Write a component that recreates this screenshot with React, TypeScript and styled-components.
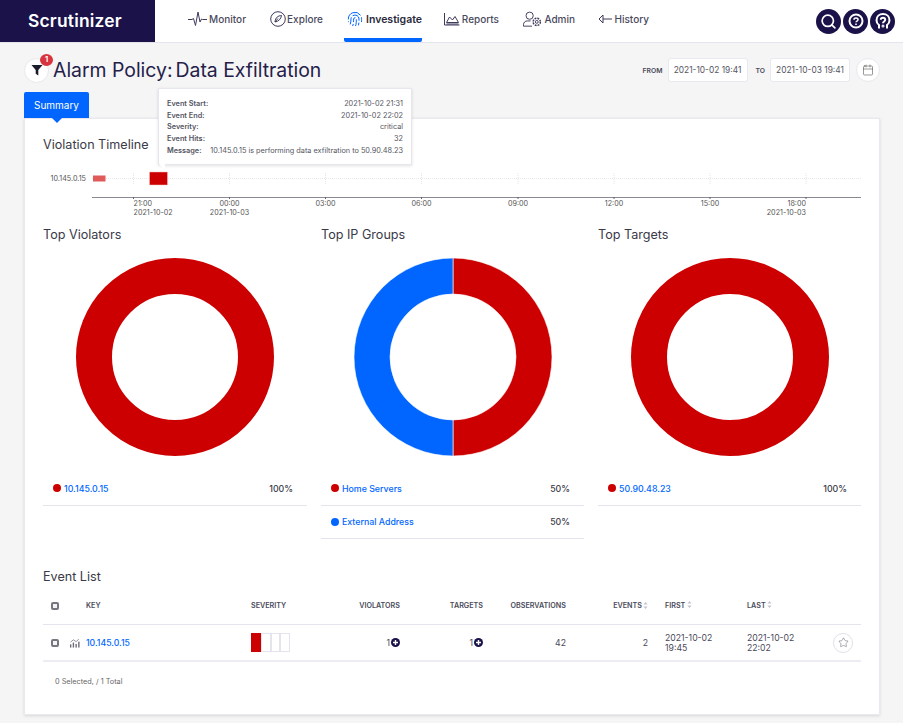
import React from "react";
import styled, { createGlobalStyle } from "styled-components";
import { Calendar, Fingerprint, Search, Star } from "lucide-react";

const NAVY = "#1a1249";
const RED = "#cc0000";
const BLUE = "#0066ff";
const ICON = "#3d3a5c";
const FONT = `Inter, "Noto Sans", "Liberation Sans", sans-serif`;

const GlobalStyle = createGlobalStyle`
  html, body { margin: 0; padding: 0; background: #f5f5f5; }
  body { font-family: ${FONT}; color: #3a3a4a; }
  * { box-sizing: border-box; }
`;

const MonitorIcon = () => (
  <svg width="19" height="16" viewBox="0 0 19 16" fill="none" stroke={ICON} strokeWidth="1">
    <path d="M0 8.500h4l1.500 -1 2 7 2.500 -13.500 2 10 1.500 -3 1 .5h4.500" />
  </svg>
);

const ExploreIcon = () => (
  <svg width="16" height="16" viewBox="0 0 16 16" fill="none" stroke={ICON} strokeWidth="1">
    <circle cx="8" cy="8" r="7.300" />
    <path d="M11.500 4.500c-3.500 .3 -6 1.800 -6.500 6.500 3.500 -.5 6 -3 6.500 -6.500z" />
    <path d="M5 11l3 -3.500" />
  </svg>
);

const ReportsIcon = () => (
  <svg width="16" height="14" viewBox="0 0 16 14" fill="none" stroke={ICON} strokeWidth="1">
    <path d="M.5 1v12h15" />
    <path d="M2.500 10.500l3 -5.500 3 3 2.500 -3.500 3.500 6z" />
    <path d="M2.500 12h12" />
  </svg>
);

const AdminIcon = () => (
  <svg width="19" height="17" viewBox="0 0 20 17" fill="none" stroke={ICON} strokeWidth="1">
    <circle cx="7" cy="4.500" r="3.800" />
    <path d="M.5 15.500v-1.500c0 -2.500 2 -4 4 -4h3.500M.5 15.500h9" />
    <circle cx="14.500" cy="11" r="1.500" />
    <circle cx="14.500" cy="11" r="3.800" strokeDasharray="2 1" strokeWidth="1.500" />
  </svg>
);

const HistoryIcon = () => (
  <svg width="14" height="10" viewBox="0 0 14 10" fill="none" stroke={ICON} strokeWidth="1">
    <path d="M5 1L1 5l4 4V1zM5 5h9" />
  </svg>
);

const HelpIcon = () => (
  <svg width="18" height="18" viewBox="0 0 18 18" fill="none" stroke="#fff" strokeWidth="2">
    <circle cx="9" cy="9" r="6.500" />
    <path d="M7 7.700c0 -1 .9 -1.600 2 -1.600s2 .6 2 1.600c0 1.400 -2 1.300 -2 2.600" strokeWidth="1.500" />
    <circle cx="9" cy="12.200" r=".5" fill="#fff" strokeWidth="1" />
  </svg>
);

const HeadIcon = () => (
  <svg width="18" height="18" viewBox="0 0 18 18" fill="none" stroke="#fff" strokeWidth="2">
    <path d="M5 16.500v-3.500C3.300 11.800 2.500 10 2.500 8.200 2.500 4.500 5.300 2 9 2s6.500 2.500 6.500 6.200c0 1.800 -.8 3.600 -2.500 4.800v3.500" />
    <path d="M6.800 7.800c0 -1.200 1 -2 2.200 -2s2.200 .8 2.200 1.900c0 1.800 -2.200 1.700 -2.200 3.500" />
    <circle cx="9" cy="14" r=".5" fill="#fff" />
  </svg>
);

const FilterIcon = () => (
  <svg width="12" height="12" viewBox="0 0 12 12" fill="#1b1b2b">
    <path d="M.5 1h11L7.300 6v5.500L4.700 9.800V6z" />
  </svg>
);

const TrendIcon = () => (
  <svg width="10" height="10" viewBox="0 0 11 10" fill="#6a6a78">
    <rect x="0" y="6.500" width="1.500" height="3.500" />
    <rect x="3" y="4.500" width="1.500" height="5.500" />
    <rect x="6" y="6" width="1.500" height="4" />
    <rect x="9" y="3.500" width="1.500" height="6.500" />
    <path d="M.7 4L3.700 1.500 6.700 3.500 9.700 .8" fill="none" stroke="#6a6a78" strokeWidth=".8" />
  </svg>
);

const PlusBadge = () => (
  <svg width="9" height="9" viewBox="0 0 9 9">
    <circle cx="4.500" cy="4.500" r="4.500" fill={NAVY} />
    <path d="M4.500 2v5M2 4.500h5" stroke="#fff" strokeWidth="1.400" />
  </svg>
);

const SortIcon = () => (
  <svg width="5" height="7" viewBox="0 0 5 7" fill="#c4c4cc">
    <path d="M2.500 0L4.500 2.500H.5zM2.500 7L.5 4.500h4z" />
  </svg>
);

const Donut = ({ split }: { split?: boolean }) => (
  <svg width="198" height="198" viewBox="0 0 198 198">
    {split ? (
      <>
        <path d="M99 0a99 99 0 0 1 0 198v-36a63 63 0 0 0 0 -126z" fill={RED} stroke="#fff" strokeWidth=".6" />
        <path d="M99 0a99 99 0 0 0 0 198v-36a63 63 0 0 1 0 -126z" fill={BLUE} stroke="#fff" strokeWidth=".6" />
      </>
    ) : (
      <circle cx="99" cy="99" r="81" fill="none" stroke={RED} strokeWidth="36" />
    )}
  </svg>
);

const ticks = [
  { x: 133.5, time: "21:00", date: "2021-10-02", anchor: "start" },
  { x: 229.5, time: "00:00", date: "2021-10-03", anchor: "middle" },
  { x: 325.5, time: "03:00", anchor: "middle" },
  { x: 421.5, time: "06:00", anchor: "middle" },
  { x: 518, time: "09:00", anchor: "middle" },
  { x: 614, time: "12:00", anchor: "middle" },
  { x: 710, time: "15:00", anchor: "middle" },
  { x: 806, time: "18:00", date: "2021-10-03", anchor: "end" },
];

const Timeline = () => (
  <TimelineSvg viewBox="43 165 818 55" width="818" height="55">
    <text x="86" y="181" textAnchor="end" fontSize="7.200" fill="#555">10.145.0.15</text>
    <path d="M92 178.500H861" stroke="#e8e8ec" strokeDasharray="1 1" />
    {ticks.map(t => (
      <path key={t.x} d={`M${t.x} 173V184`} stroke="#e4e4e8" strokeDasharray="1 1" />
    ))}
    <rect x="93" y="175.500" width="12.500" height="6" fill="#e05a5a" />
    <rect x="149.500" y="172" width="18" height="13" fill={RED} stroke="#f3c4c4" strokeWidth=".5" />
    <path d="M92 197.500H861" stroke="#8a8a92" strokeWidth="1.200" />
    {ticks.map(t => (
      <g key={t.time} fontSize="7.200" fill="#555">
        <path d={`M${t.x} 197V199`} stroke="#666" />
        <text x={t.x} y="206" textAnchor={t.anchor}>{t.time}</text>
        {t.date && <text x={t.x} y="215" textAnchor={t.anchor}>{t.date}</text>}
      </g>
    ))}
  </TimelineSvg>
);

const navItems = [
  { label: "Monitor", icon: <MonitorIcon />, width: 58, next: 24 },
  { label: "Explore", icon: <ExploreIcon />, width: 53, next: 21 },
  { label: "Investigate", icon: <Fingerprint size={16} color={BLUE} strokeWidth={1.5} />, active: true, width: 78, next: 22 },
  { label: "Reports", icon: <ReportsIcon />, width: 55, next: 24 },
  { label: "Admin", icon: <AdminIcon />, width: 52, next: 23 },
  { label: "History", icon: <HistoryIcon />, width: 51, next: 0 },
];

const charts = [
  { title: "Top Violators", rows: [{ name: "10.145.0.15", pct: "100%", color: RED }] },
  {
    title: "Top IP Groups",
    split: true,
    rows: [
      { name: "Home Servers", pct: "50%", color: RED },
      { name: "External Address", pct: "50%", color: BLUE },
    ],
  },
  { title: "Top Targets", rows: [{ name: "50.90.48.23", pct: "100%", color: RED }] },
];

const tipRows = [
  ["Event Start:", "2021-10-02 21:31"],
  ["Event End:", "2021-10-02 22:02"],
  ["Severity:", "critical"],
  ["Event Hits:", "32"],
  ["Message:", "10.145.0.15 is performing data exfiltration to 50.90.48.23"],
];

export default function App() {
  return (
    <>
      <GlobalStyle />
      <Header>
        <Logo>Scrutinizer</Logo>
        <Nav>
          {navItems.map(item => (
            <NavItem key={item.label} $active={item.active} $width={item.width} $next={item.next}>
              {item.icon}
              {item.label}
            </NavItem>
          ))}
        </Nav>
        <HeaderActions>
          <RoundAction><Search size={17} strokeWidth={2.4} /></RoundAction>
          <RoundAction><HelpIcon /></RoundAction>
          <RoundAction><HeadIcon /></RoundAction>
        </HeaderActions>
      </Header>
      <Main>
        <TitleRow>
          <FilterButton>
            <FilterIcon />
            <FilterBadge>1</FilterBadge>
          </FilterButton>
          <Title>Alarm Policy:<TitleName>Data Exfiltration</TitleName></Title>
          <DateControls>
            <DateLabel>FROM</DateLabel>
            <DateInput>2021-10-02 19:41</DateInput>
            <DateLabel>TO</DateLabel>
            <DateInput>2021-10-03 19:41</DateInput>
            <CalendarButton><Calendar size={12} strokeWidth={1.2} /></CalendarButton>
          </DateControls>
        </TitleRow>
        <Tab>Summary</Tab>
        <Card>
          <Tooltip>
            {tipRows.map(([k, v]) => (
              <TipRow key={k}><TipKey>{k}</TipKey><span>{v}</span></TipRow>
            ))}
          </Tooltip>
          <SectionTitle>Violation Timeline</SectionTitle>
          <Timeline />
          <ChartGrid>
            {charts.map(chart => (
              <ChartPanel key={chart.title}>
                <SectionTitle>{chart.title}</SectionTitle>
                <DonutWrap><Donut split={chart.split} /></DonutWrap>
                {chart.rows.map(row => (
                  <LegendRow key={row.name}>
                    <Dot $color={row.color} />
                    <LegendLink>{row.name}</LegendLink>
                    <LegendPct>{row.pct}</LegendPct>
                  </LegendRow>
                ))}
              </ChartPanel>
            ))}
          </ChartGrid>
          <EventTitle>Event List</EventTitle>
          <HeadRow>
            <CheckCell><Check /></CheckCell>
            <span>KEY</span>
            <span>SEVERITY</span>
            <RightCell>VIOLATORS</RightCell>
            <RightCell>TARGETS</RightCell>
            <RightCell>OBSERVATIONS</RightCell>
            <RightCell>EVENTS <SortIcon /></RightCell>
            <FirstCell>FIRST <SortIcon /></FirstCell>
            <span>LAST <SortIcon /></span>
            <span />
          </HeadRow>
          <BodyRow>
            <CheckCell><Check /><TrendIcon /></CheckCell>
            <KeyLink>10.145.0.15</KeyLink>
            <SeverityBar>
              <SeverityCell $on />
              <SeverityCell />
              <SeverityCell />
              <SeverityCell />
            </SeverityBar>
            <RightCell>1<PlusBadge /></RightCell>
            <RightCell>1<PlusBadge /></RightCell>
            <RightCell>42</RightCell>
            <RightCell>2</RightCell>
            <FirstCell>2021-10-02<br />19:45</FirstCell>
            <span>2021-10-02<br />22:02</span>
            <StarButton><Star size={11} strokeWidth={1} /></StarButton>
          </BodyRow>
          <Footer>0 Selected, / 1 Total</Footer>
        </Card>
      </Main>
    </>
  );
}

const Header = styled.header`
  display: flex;
  align-items: stretch;
  height: 43px;
  background: #fff;
  border-bottom: 1px solid #e4e4ee;
`;

const Logo = styled.div`
  width: 155px;
  padding-left: 28px;
  background: ${NAVY};
  color: #fff;
  font-size: 17.400px;
  font-weight: 600;
  letter-spacing: 0.2px;
  line-height: 41px;
`;

const Nav = styled.nav`
  display: flex;
  margin-left: 33px;
`;

const NavItem = styled.div<{ $active?: boolean; $width: number; $next: number }>`
  display: flex;
  align-items: center;
  justify-content: space-between;
  width: ${p => p.$width}px;
  height: 42px;
  margin-right: ${p => p.$next}px;
  padding-left: ${p => (p.$active ? 3 : 0)}px;
  font-size: ${p => (p.$active ? 10.5 : 10)}px;
  font-weight: ${p => (p.$active ? 600 : 500)};
  color: ${p => (p.$active ? "#2a2a3c" : "#4a4a5e")};
  border-bottom: 4px solid ${p => (p.$active ? BLUE : "transparent")};
  border-radius: 0 0 2px 2px;

  svg {
    flex-shrink: 0;
  }
`;

const HeaderActions = styled.div`
  display: flex;
  align-items: center;
  gap: 2px;
  margin-left: auto;
  padding-right: 8px;
`;

const RoundAction = styled.div`
  display: flex;
  align-items: center;
  justify-content: center;
  width: 25px;
  height: 25px;
  border-radius: 50%;
  background: ${NAVY};
  color: #fff;
`;

const Main = styled.main`
  padding: 13px 23px 8px 24px;
`;

const TitleRow = styled.div`
  display: flex;
  align-items: center;
  height: 28px;
`;

const FilterButton = styled.div`
  position: relative;
  display: flex;
  align-items: center;
  justify-content: center;
  width: 25px;
  height: 25px;
  border-radius: 50%;
  background: #fff;
  border: 1px solid #e8e8ee;
`;

const FilterBadge = styled.span`
  position: absolute;
  top: -5px;
  right: -5px;
  width: 13px;
  height: 12px;
  border-radius: 50%;
  background: #d9333f;
  color: #fff;
  font-size: 7.500px;
  font-weight: 700;
  line-height: 12px;
  text-align: center;
`;

const Title = styled.h1`
  margin: 0 0 0 4px;
  font-size: 19.400px;
  font-weight: 400;
  color: #24204a;
`;

const TitleName = styled.span`
  margin-left: 3px;
`;

const DateControls = styled.div`
  display: flex;
  align-items: center;
  margin-left: auto;
`;

const DateLabel = styled.span`
  margin: 0 5px 0 8px;
  font-size: 6.800px;
  font-weight: 600;
  color: #4a4a5a;
`;

const DateInput = styled.div`
  width: 80px;
  height: 24px;
  border: 1px solid #e8e8f0;
  border-radius: 3px;
  background: #fff;
  font-size: 8.400px;
  line-height: 22px;
  text-align: center;
  color: #55555f;
`;

const CalendarButton = styled.div`
  display: flex;
  align-items: center;
  justify-content: center;
  width: 24px;
  height: 24px;
  margin-left: 6px;
  border-radius: 50%;
  background: #fff;
  border: 1px solid #e8e8ee;
  color: #555;
`;

const Tab = styled.div`
  position: relative;
  width: 65px;
  height: 26px;
  margin-top: 8px;
  border-radius: 2px 2px 0 0;
  background: ${BLUE};
  color: #fff;
  font-size: 10px;
  line-height: 26px;
  text-align: center;

  &::after {
    content: "";
    position: absolute;
    left: 28px;
    bottom: -5px;
    border: 5px solid transparent;
    border-bottom: 0;
    border-top-color: ${BLUE};
    z-index: 2;
  }
`;

const Card = styled.section`
  position: relative;
  height: 597px;
  padding: 17px 18px 0;
  background: #fff;
  border: 1px solid #e8e8ee;
  box-shadow: 0 1px 3px rgba(0, 0, 0, 0.12);
`;

const Tooltip = styled.div`
  position: absolute;
  left: 133px;
  top: -31px;
  width: 254px;
  height: 77px;
  padding: 9px 8px 0;
  background: #fff;
  border: 1px solid #e6e6ee;
  box-shadow: 0 1px 3px rgba(0, 0, 0, 0.12);
  font-size: 7.300px;
  color: #55555f;
  z-index: 3;

  &::after {
    content: "";
    position: absolute;
    left: 0;
    bottom: -7px;
    border-top: 7px solid #fff;
    border-left: 6px solid transparent;
  }
`;

const TipRow = styled.div`
  display: flex;
  justify-content: space-between;
  height: 11.700px;
  line-height: 11.700px;
`;

const TipKey = styled.span`
  font-weight: 600;
`;

const SectionTitle = styled.h2`
  margin: 0;
  font-size: 12.600px;
  font-weight: 400;
  line-height: 18px;
  color: #3a3a48;
`;

const TimelineSvg = styled.svg`
  display: block;
  margin-top: 11px;
  font-family: ${FONT};
`;

const ChartGrid = styled.div`
  display: grid;
  grid-template-columns: 264px 263px 263px;
  gap: 14px;
  width: 818px;
  margin-top: 6px;
  height: 342px;
`;

const ChartPanel = styled.div`
  display: flex;
  flex-direction: column;
`;

const DonutWrap = styled.div`
  display: flex;
  justify-content: center;
  height: 228px;
  padding-top: 14px;
`;

const LegendRow = styled.div`
  display: flex;
  align-items: center;
  height: 33.500px;
  padding: 0 14px 0 10px;
  border-bottom: 1px solid #e4e4ee;
  font-size: 8.800px;
  font-weight: 500;
`;

const Dot = styled.span<{ $color: string }>`
  width: 8px;
  height: 8px;
  margin-right: 3px;
  border-radius: 50%;
  background: ${p => p.$color};
`;

const LegendLink = styled.span`
  color: ${BLUE};
`;

const LegendPct = styled.span`
  margin-left: auto;
  color: #3a3a48;
`;

const EventTitle = styled(SectionTitle)`
  margin-bottom: 1px;
`;

const HeadRow = styled.div`
  display: grid;
  grid-template-columns: 43px 165px 100px 49px 83px 83px 82px 99px 82px 32px;
  align-items: center;
  width: 818px;
  height: 38px;
  border-bottom: 1px solid #e4e4ee;
  font-size: 7.200px;
  font-weight: 600;
  color: #4a4a5a;
`;

const BodyRow = styled(HeadRow)`
  height: 37px;
  border-bottom-width: 2px;
  border-bottom-color: #ececf2;
  font-size: 8.700px;
  font-weight: 400;
  line-height: 10px;
  color: #4a4a5a;
`;

const CheckCell = styled.span`
  display: flex;
  align-items: center;
  gap: 11px;
  padding-left: 8px;
`;

const Check = styled.span`
  width: 8px;
  height: 8px;
  border: 2px solid #77777f;
  border-radius: 2px;
  background: #f4f4f6;
`;

const RightCell = styled.span`
  display: flex;
  align-items: center;
  justify-content: flex-end;
  gap: 1px;
`;

const FirstCell = styled.span`
  padding-left: 17px;
`;

const KeyLink = styled.span`
  font-weight: 500;
  color: ${BLUE};
`;

const SeverityBar = styled.div`
  display: flex;
`;

const SeverityCell = styled.span<{ $on?: boolean }>`
  width: 9.750px;
  height: 19px;
  background: ${p => (p.$on ? RED : "#fff")};
  border: 1px solid ${p => (p.$on ? RED : "#e4e4ee")};
`;

const StarButton = styled.span`
  display: flex;
  align-items: center;
  justify-content: center;
  width: 20px;
  height: 20px;
  margin-left: 4px;
  border: 1px solid #e0e0e8;
  border-radius: 50%;
`;

const Footer = styled.div`
  margin-top: 15px;
  padding-left: 12px;
  font-size: 7.300px;
  color: #666;
`;
